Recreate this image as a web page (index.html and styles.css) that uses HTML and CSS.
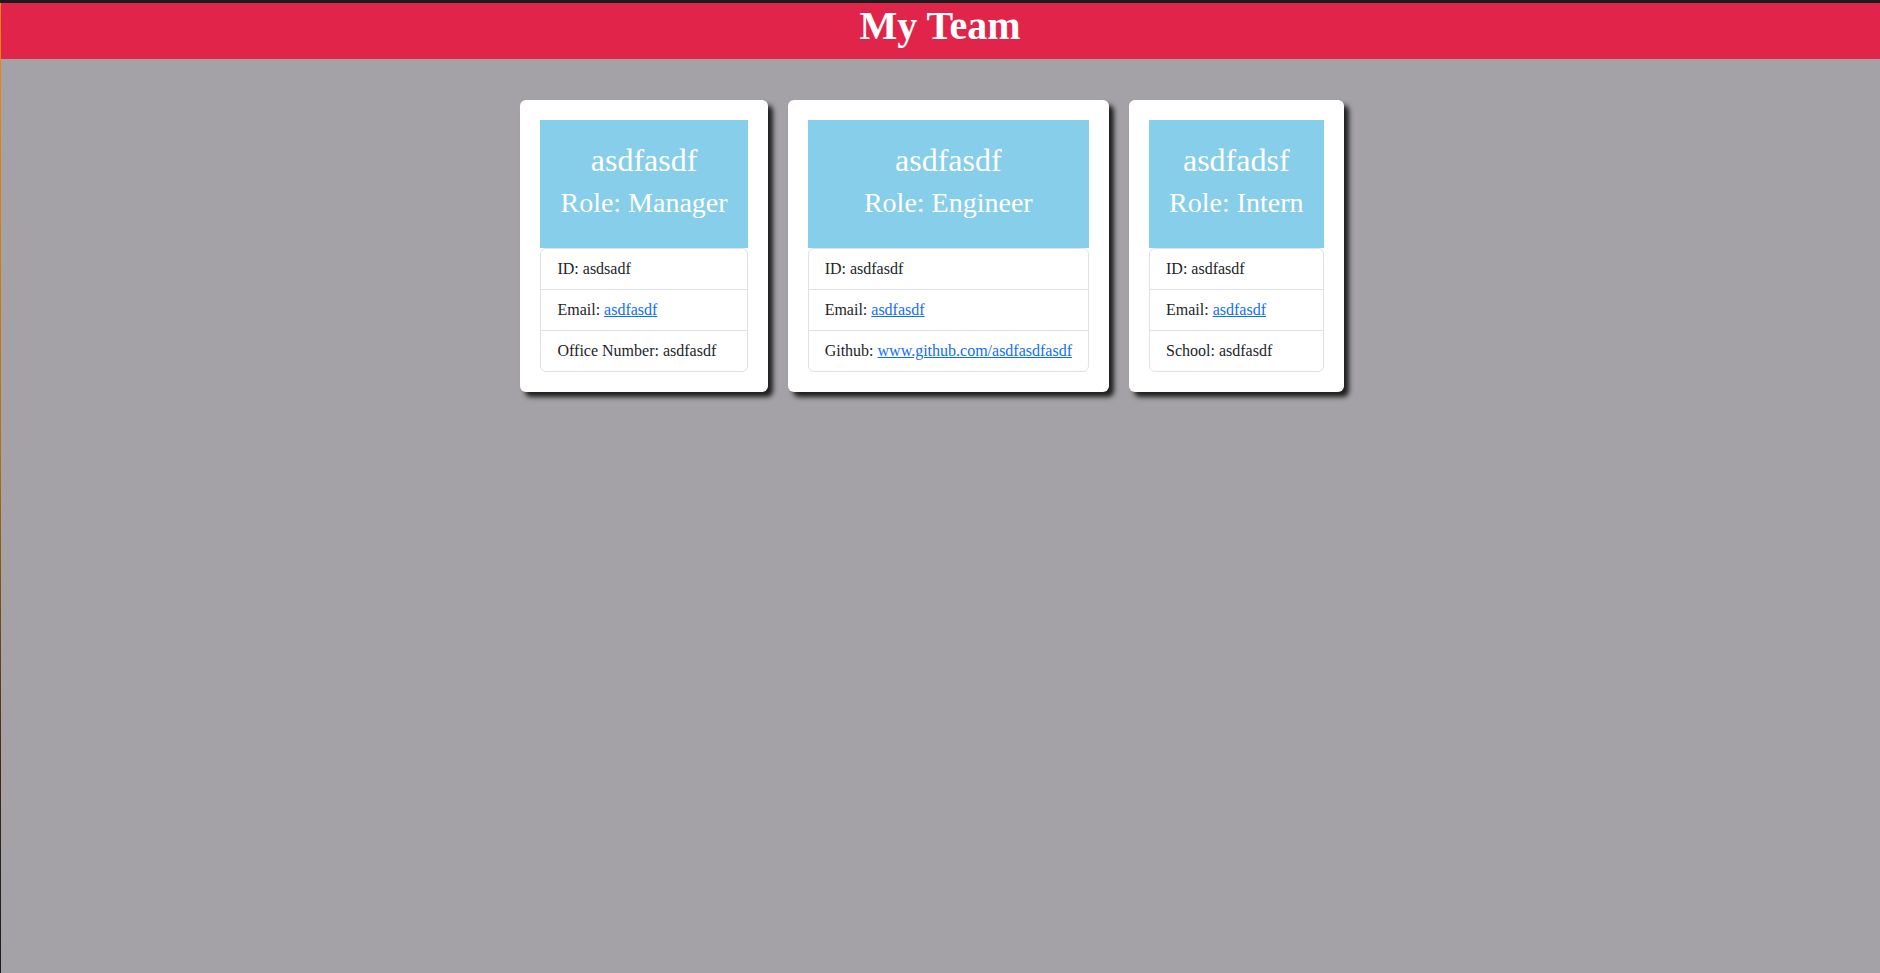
FILE: index.html
```html
<!DOCTYPE html>
<html lang="en">
<head>
<meta charset="UTF-8">
<title>My Team</title>
<link rel="stylesheet" href="styles.css">
</head>
<body>
<div class="edge"></div>
<div class="topline"></div>
<header class="banner">
  <h1 class="banner-title">My Team</h1>
</header>
<main class="team">
  <section class="card">
    <div class="card-head">
      <div class="card-name">asdfasdf</div>
      <div class="card-role">Role: Manager</div>
    </div>
    <ul class="info">
      <li class="info-item">ID: asdsadf</li>
      <li class="info-item">Email: <a href="#" class="info-link">asdfasdf</a></li>
      <li class="info-item">Office Number: asdfasdf</li>
    </ul>
  </section>
  <section class="card">
    <div class="card-head">
      <div class="card-name">asdfasdf</div>
      <div class="card-role">Role: Engineer</div>
    </div>
    <ul class="info">
      <li class="info-item">ID: asdfasdf</li>
      <li class="info-item">Email: <a href="#" class="info-link">asdfasdf</a></li>
      <li class="info-item">Github: <a href="#" class="info-link">www.github.com/asdfasdfasdf</a></li>
    </ul>
  </section>
  <section class="card">
    <div class="card-head">
      <div class="card-name">asdfadsf</div>
      <div class="card-role">Role: Intern</div>
    </div>
    <ul class="info">
      <li class="info-item">ID: asdfasdf</li>
      <li class="info-item">Email: <a href="#" class="info-link">asdfasdf</a></li>
      <li class="info-item">School: asdfasdf</li>
    </ul>
  </section>
</main>
</body>
</html>
```

FILE: styles.css
```css
* {
  box-sizing: border-box;
}

html, body {
  margin: 0;
  padding: 0;
}

body {
  min-height: 973px;
  background: #a4a2a7;
  font-family: "Liberation Serif", "Times New Roman", serif;
  font-size: 16px;
  line-height: 1.5;
  color: #212529;
}

.edge {
  position: fixed;
  left: 0;
  top: 3px;
  bottom: 0;
  width: 1px;
  background: linear-gradient(#f08a0c 0%, #b8720f 45%, #3a2a14 80%, #1c1c1c 100%);
  z-index: 5;
}

.topline {
  height: 3px;
  background: #1b1b1b;
}

.banner {
  height: 56px;
  padding-top: 2px;
  background: #e1244a;
  text-align: center;
}

.banner-title {
  margin: 0;
  font-size: 40px;
  line-height: 42px;
  font-weight: bold;
  color: #ffffff;
}

.team {
  display: flex;
  justify-content: center;
  align-items: flex-start;
  gap: 20px;
  padding: 41px 16px 0 0;
}

.card {
  background: #ffffff;
  border-radius: 6px;
  padding: 20px;
  box-shadow: 5px 5px 5px #1e1e1e;
}

.card-head {
  background: #87ceeb;
  color: #ffffff;
  text-align: center;
  padding: 18px 20px 24px;
  white-space: nowrap;
}

.card-name {
  font-size: 32px;
  line-height: 44px;
}

.card-role {
  font-size: 28px;
  line-height: 42px;
}

.info {
  list-style: none;
  margin: 0;
  padding: 0;
  border: 1px solid #dee2e6;
  border-radius: 6px;
}

.info-item {
  padding: 8px 16px;
  white-space: nowrap;
}

.info-item + .info-item {
  border-top: 1px solid #dee2e6;
}

.info-link {
  color: #0d6efd;
  text-decoration: underline;
}
```
